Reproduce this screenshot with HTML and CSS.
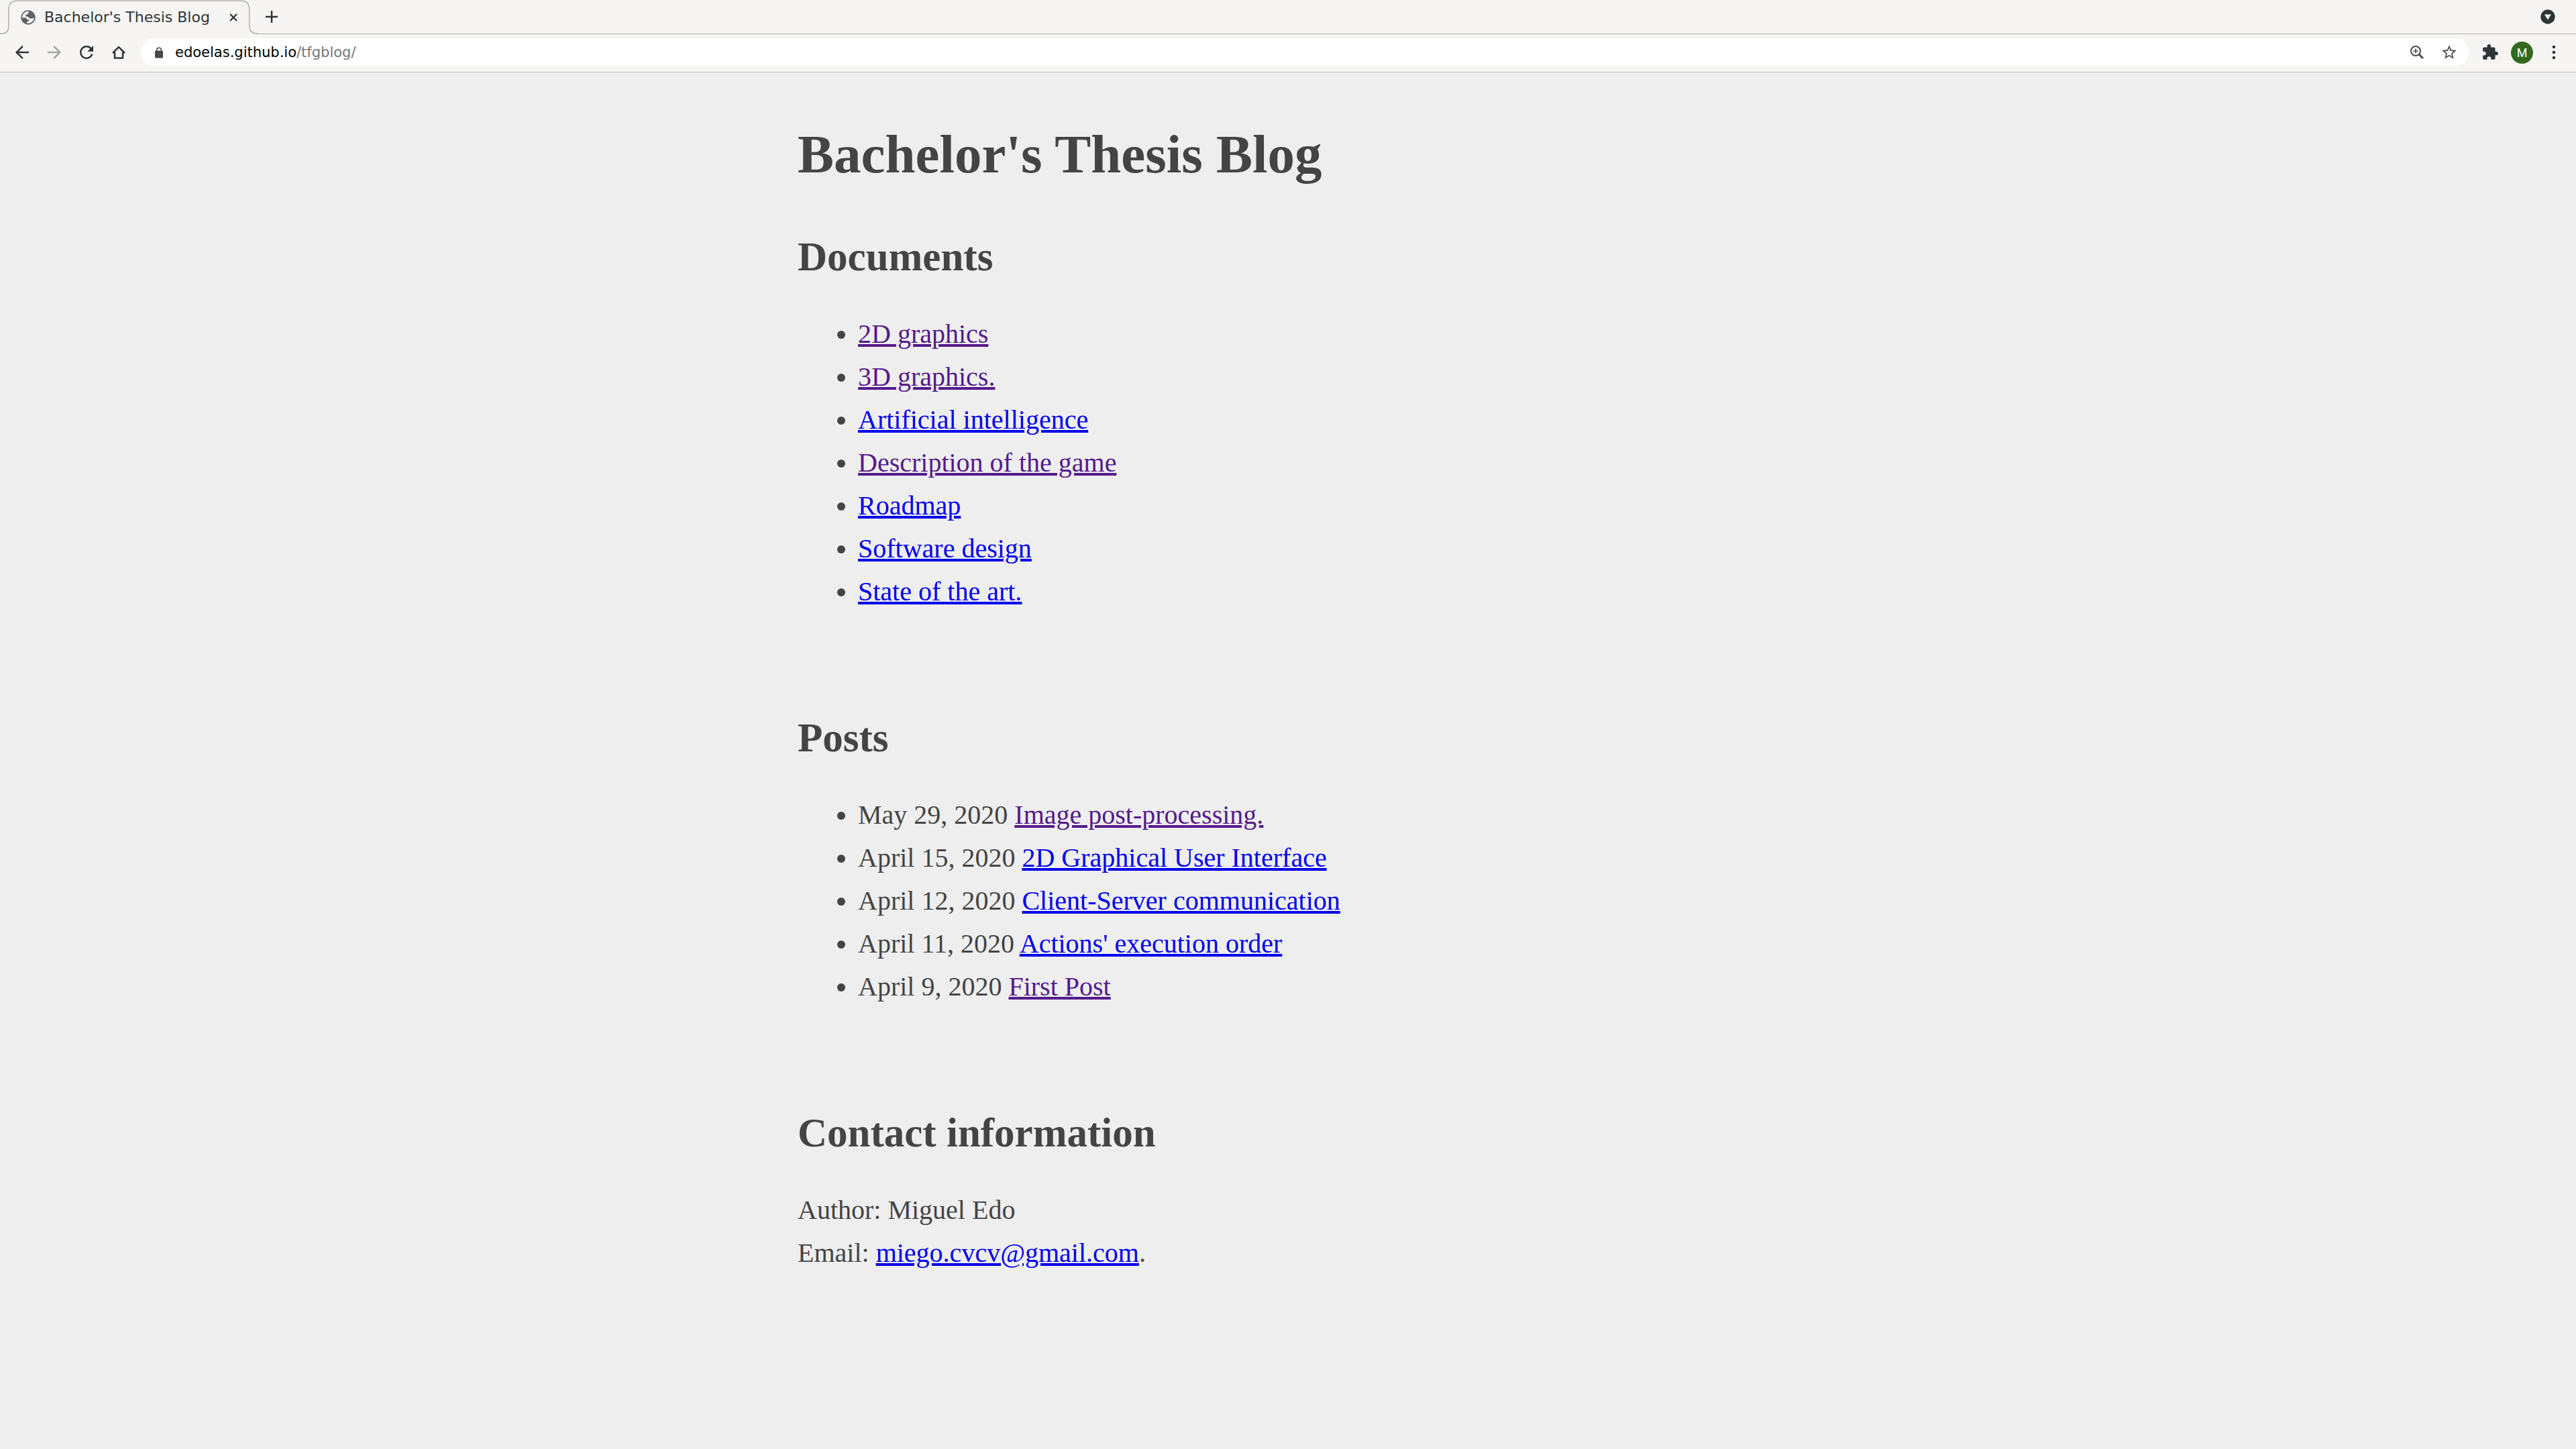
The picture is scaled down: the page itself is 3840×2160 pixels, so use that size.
FILE: index.html
```html
<!DOCTYPE html>
<html lang="en">
<head>
<meta charset="utf-8">
<title>Bachelor's Thesis Blog</title>
<link rel="stylesheet" href="styles.css">
</head>
<body>
<header class="browser">
  <div class="strip">
    <div class="tab">
      <svg class="tab-outline" width="385" height="51" viewBox="0 0 385 51" aria-hidden="true"><path d="M0 50.2H2Q13 50.2 13 38V14Q13 1.3 26 1.3H359Q371.7 1.3 371.7 14V38Q371.7 50.2 384 50.2H385" fill="none" stroke="#b0afad" stroke-width="1.5"/></svg>
      <svg class="globe" width="22" height="22" viewBox="0 0 22 22" aria-hidden="true"><circle cx="11" cy="11" r="10.7" fill="#5f6368"/><path d="M12.5 2.1 10 6.2 7 7.3 7.3 9.5 10.8 10 12.8 12.2 16.8 12.8 19.8 11.5A8.9 8.9 0 0 1 9 19.6L9 17.5 11.8 16.8 12.3 14.5 9.2 13.8 8 11.6 2.1 11.2A8.9 8.9 0 0 1 12.5 2.1Z" fill="#f6f5f4"/><path d="M12.2 2.5 15.8 3.7 19.8 9.6 19.5 12 16 11.8 13.4 10.2 13.7 8.2 10.7 7.5Z" fill="#5f6368"/></svg>
      <span class="tab-title">Bachelor's Thesis Blog</span>
      <button class="tab-close" aria-label="Close tab"><svg width="12" height="12" viewBox="0 0 12 12"><path d="M1 1 11 11M11 1 1 11" stroke="#2e3436" stroke-width="2.2"/></svg></button>
    </div>
    <div class="strip-rest">
      <button class="new-tab" aria-label="New tab"><svg width="18" height="18" viewBox="0 0 18 18"><path d="M9 0V18M0 9H18" stroke="#2e3436" stroke-width="2.5"/></svg></button>
      <button class="tab-search" aria-label="Search tabs"><svg width="22" height="22" viewBox="0 0 22 22"><circle cx="11" cy="11" r="10.7" fill="#2e3436"/><path d="M6 7.5H16L11 15.5Z" fill="#f6f5f4"/></svg></button>
    </div>
  </div>
  <div class="toolbar">
    <nav class="nav" aria-label="Browser">
      <button class="tool" aria-label="Back"><svg width="30" height="30" viewBox="0 0 24 24"><path d="M20 11H7.8l5.6-5.6L12 4l-8 8 8 8 1.4-1.4L7.8 13H20Z" fill="#2e3436"/></svg></button>
      <button class="tool" aria-label="Forward" disabled><svg width="30" height="30" viewBox="0 0 24 24"><path d="M4 11h12.2l-5.6-5.6L12 4l8 8-8 8-1.4-1.4 5.6-5.6H4Z" fill="#a3a4a4"/></svg></button>
      <button class="tool" aria-label="Reload"><svg width="30" height="30" viewBox="0 0 24 24"><path d="M17.65 6.35A8 8 0 1 0 19.73 14h-2.08A6 6 0 1 1 16.22 7.78L13 11h7V4Z" fill="#2e3436"/></svg></button>
      <button class="tool" aria-label="Home"><svg width="20" height="20" viewBox="0 0 20 20"><path d="M1 11 10 2.200 19 11M4 9.500V18.500H16V9.500" fill="none" stroke="#2e3436" stroke-width="2.5"/></svg></button>
    </nav>
    <form class="address">
      <svg class="lock" width="12" height="17" viewBox="0 0 12 17" aria-hidden="true"><rect y="5.500" width="12" height="11" rx="1.500" fill="#4a4a4a"/><path d="M2.700 6.500V4.500a3.300 3.300 0 0 1 6.600 0V6.500" fill="none" stroke="#4a4a4a" stroke-width="1.600"/></svg>
      <label class="url"><input class="host" type="text" aria-label="Address" value="edoelas.github.io"><span class="path">/tfgblog/</span></label>
      <button class="tool" type="button" aria-label="Zoom"><svg width="22" height="22" viewBox="0 0 22 22"><circle cx="9" cy="9" r="7" fill="none" stroke="#4a4a4a" stroke-width="2"/><path d="M9 5.500V12.500M5.500 9H12.500" stroke="#4a4a4a" stroke-width="1.600"/><path d="M13.800 13.800 20 20" stroke="#4a4a4a" stroke-width="3"/></svg></button>
      <button class="tool" type="button" aria-label="Bookmark"><svg width="26" height="26" viewBox="0 0 24 24"><path d="m22 9.240-7.190-.620L12 2 9.190 8.630 2 9.240l5.460 4.730L5.820 21 12 17.270 18.180 21l-1.630-7.030ZM12 15.400l-3.760 2.270 1-4.280-3.320-2.880 4.380-.380L12 6.100l1.710 4.040 4.380.380-3.320 2.880 1 4.280Z" fill="#4a4a4a"/></svg></button>
    </form>
    <div class="actions">
      <button class="tool" aria-label="Extensions"><svg width="26" height="26" viewBox="0 0 24 24"><path d="M20.500 11H19V7a2 2 0 0 0-2-2h-4V3.500a2.500 2.500 0 0 0-5 0V5H4a2 2 0 0 0-2 2v3.800h1.500a2.700 2.700 0 0 1 0 5.400H2V20a2 2 0 0 0 2 2h3.800v-1.500a2.700 2.700 0 0 1 5.400 0V22H17a2 2 0 0 0 2-2v-4h1.500a2.500 2.500 0 0 0 0-5Z" fill="#2e3436"/></svg></button>
      <button class="avatar" aria-label="Profile">M</button>
      <button class="tool" aria-label="Menu"><svg width="6" height="22" viewBox="0 0 6 22"><g fill="#2e3436"><circle cx="3" cy="3" r="2.300"/><circle cx="3" cy="11" r="2.300"/><circle cx="3" cy="19" r="2.300"/></g></svg></button>
    </div>
  </div>
</header>
<main class="page">
  <h1 class="title">Bachelor's Thesis Blog</h1>
  <section class="section">
    <h2 class="heading">Documents</h2>
    <ul class="list">
      <li><a class="link visited" href="#2d">2D graphics</a></li>
      <li><a class="link visited" href="#3d">3D graphics.</a></li>
      <li><a class="link" href="#ai">Artificial intelligence</a></li>
      <li><a class="link visited" href="#game">Description of the game</a></li>
      <li><a class="link" href="#roadmap">Roadmap</a></li>
      <li><a class="link" href="#design">Software design</a></li>
      <li><a class="link" href="#art">State of the art.</a></li>
    </ul>
  </section>
  <section class="section">
    <h2 class="heading">Posts</h2>
    <ul class="list">
      <li>May 29, 2020 <a class="link visited" href="#post5">Image post-processing.</a></li>
      <li>April 15, 2020 <a class="link" href="#post4">2D Graphical User Interface</a></li>
      <li>April 12, 2020 <a class="link" href="#post3">Client-Server communication</a></li>
      <li>April 11, 2020 <a class="link" href="#post2">Actions' execution order</a></li>
      <li>April 9, 2020 <a class="link visited" href="#post1">First Post</a></li>
    </ul>
  </section>
  <section class="section">
    <h2 class="heading">Contact information</h2>
    <p class="contact">Author: Miguel Edo<br>Email: <a class="link" href="mailto:miego.cvcv@gmail.com">miego.cvcv@gmail.com</a>.</p>
  </section>
</main>
</body>
</html>
```
FILE: styles.css
```css
* { box-sizing: border-box; }

body {
  margin: 0;
  background: #eeeeee;
  color: #444444;
  font-family: "Liberation Serif", serif;
  font-size: 40px;
  line-height: 64px;
}

button {
  display: flex;
  align-items: center;
  justify-content: center;
  padding: 0;
  border: 0;
  background: none;
}

/* Browser frame */
.browser {
  background: #f6f5f4;
  border-bottom: 1px solid #c5c2be;
  color: #2e3436;
  font-family: "DejaVu Sans", sans-serif;
  font-size: 22px;
  line-height: 28px;
}

.strip {
  display: flex;
  height: 51px;
}

.tab {
  position: relative;
  display: flex;
  align-items: center;
  width: 385px;
  padding-left: 31px;
}

.tab-outline {
  position: absolute;
  top: 0;
  left: 0;
}

.tab-title {
  flex: 1;
  margin-left: 13px;
  white-space: nowrap;
}

.tab-close {
  width: 24px;
  height: 24px;
  margin-right: 25px;
}

.strip-rest {
  display: flex;
  flex: 1;
  align-items: center;
  justify-content: space-between;
  padding: 0 31px 0 11px;
  border-bottom: 1px solid #b0afad;
}

.toolbar {
  display: flex;
  align-items: center;
  height: 56px;
  padding: 0 9px 2px;
}

.nav,
.actions {
  display: flex;
  align-items: center;
}

.tool {
  width: 48px;
  height: 42px;
}

.address {
  display: flex;
  flex: 1;
  align-items: center;
  height: 42px;
  margin: 0 8px 0 9px;
  padding: 0 5px 0 21px;
  border-radius: 21px;
  background: #ffffff;
}

.url {
  display: flex;
  flex: 1;
  align-items: center;
  margin-left: 18px;
  font-size: 21px;
}

.host {
  field-sizing: content;
  padding: 0;
  border: 0;
  background: none;
  color: #000000;
  font: inherit;
}

.path { color: #767676; }

.avatar {
  width: 33px;
  height: 33px;
  margin: 0 7px;
  border-radius: 50%;
  background: #33691e;
  color: #ffffff;
  font-family: Roboto, sans-serif;
  font-size: 18px;
}

/* Blog page */
.page {
  max-width: 1508px;
  margin: 0 auto;
  padding: 74px 23px;
}

.title {
  margin: 0 0 67px;
  font-size: 81px;
  line-height: 97px;
}

.heading {
  margin: 0 0 47px;
  font-size: 61px;
  line-height: 73px;
}

.section { margin-bottom: 149px; }

.section:last-child { margin-bottom: 0; }

.list {
  margin: 0;
  padding-left: 90px;
}

.contact { margin: 0; }

.link {
  color: #0000ee;
  text-decoration-thickness: 4px;
}

.visited { color: #551a8b; }
```
